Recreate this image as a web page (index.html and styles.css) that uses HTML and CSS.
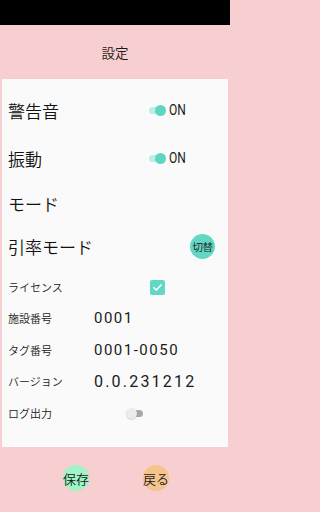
FILE: index.html
```html
<!DOCTYPE html>
<html lang="ja">
<head>
<meta charset="utf-8">
<link rel="stylesheet" href="styles.css">
</head>
<body>
<div class="screen">
  <div class="statusbar"></div>
  <header class="header"><span class="title">設定</span></header>
  <main class="panel">
    <div class="row big r1">
      <span class="label-big">警告音</span>
      <span class="toggle-on"><span class="track-on"><span class="thumb-on"></span></span><span class="on-text">ON</span></span>
    </div>
    <div class="row big r2">
      <span class="label-big">振動</span>
      <span class="toggle-on"><span class="track-on"><span class="thumb-on"></span></span><span class="on-text">ON</span></span>
    </div>
    <div class="row big r3">
      <span class="label-big">モード</span>
    </div>
    <div class="row big r4">
      <span class="label-big">引率モード</span>
      <span class="switch-btn">切替</span>
    </div>
    <div class="row small">
      <span class="label-small">ライセンス</span>
      <span class="checkbox"><svg viewBox="0 0 16 16" width="16" height="16"><path d="M3.6 8.2 L6.6 11.1 L12.4 4.9" fill="none" stroke="#ffffff" stroke-width="1.8" stroke-linecap="square"/></svg></span>
    </div>
    <div class="row small">
      <span class="label-small">施設番号</span>
      <span class="value">0001</span>
    </div>
    <div class="row small">
      <span class="label-small">タグ番号</span>
      <span class="value">0001-0050</span>
    </div>
    <div class="row small">
      <span class="label-small">バージョン</span>
      <span class="value version">0.0.231212</span>
    </div>
    <div class="row small">
      <span class="label-small">ログ出力</span>
      <span class="toggle-off"><span class="track-off"></span><span class="thumb-off"></span></span>
    </div>
  </main>
  <footer class="footer">
    <span class="round-btn save">保存</span>
    <span class="round-btn back">戻る</span>
  </footer>
</div>
</body>
</html>
```

FILE: styles.css
```css
html, body {
  margin: 0;
  padding: 0;
}
html {
  background: #f8cfd0;
}
body {
  width: 230px;
  height: 512px;
  overflow: hidden;
  background: #f8cfd0;
  font-family: "Noto Sans CJK JP", "Noto Sans", sans-serif;
  color: #1a1a1a;
}
.screen {
  display: flex;
  flex-direction: column;
  height: 512px;
}
.statusbar {
  height: 25px;
  background: #000000;
  flex: none;
}
.header {
  height: 54px;
  flex: none;
  display: flex;
  align-items: center;
  justify-content: center;
  background: #f8cfd0;
}
.title {
  font-size: 13.5px;
  font-weight: 350;
  line-height: 1;
  color: #1a1a1a;
  padding-top: 1px;
}
.panel {
  flex: none;
  height: 367.5px;
  margin: 0 2px;
  background: #fafafa;
  box-sizing: border-box;
  padding: 7px 0 0 6px;
  display: flex;
  flex-direction: column;
}
.row {
  display: flex;
  align-items: center;
  position: relative;
}
.big {
  height: 48px;
}
.r3 {
  height: 42px;
}
.r4 {
  height: 44px;
  padding-bottom: 3.25px;
}
.small {
  height: 31.5px;
}
.label-big {
  font-size: 17px;
  font-weight: 350;
  line-height: 1;
  color: #111;
}
.label-small {
  font-size: 11px;
  font-weight: 350;
  line-height: 1;
  color: #1a1a1a;
  width: 86px;
  flex: none;
}
.toggle-on {
  margin-left: auto;
  margin-right: 38px;
  display: flex;
  align-items: center;
}
.track-on {
  position: relative;
  width: 14px;
  height: 7px;
  border-radius: 4px;
  background: #b9eee4;
}
.thumb-on {
  position: absolute;
  right: -3px;
  top: -2px;
  width: 11px;
  height: 11px;
  border-radius: 50%;
  background: #5fd6c2;
}
.on-text {
  margin-left: 6px;
  font-family: "Roboto", "Liberation Sans", sans-serif;
  font-size: 15px;
  line-height: 1;
  color: #1a1a1a;
  transform: scaleX(0.8);
  transform-origin: left center;
}
.switch-btn {
  margin-left: auto;
  margin-right: 13px;
  width: 25px;
  height: 25px;
  border-radius: 50%;
  background: #63d7c4;
  display: flex;
  align-items: center;
  justify-content: center;
  font-size: 10.5px;
  font-weight: 350;
  color: #1a1a1a;
  white-space: nowrap;
  letter-spacing: -0.5px;
}
.checkbox {
  margin-left: 56px;
  width: 15px;
  height: 15px;
  border-radius: 2px;
  background: #63d7c4;
  display: flex;
  align-items: center;
  justify-content: center;
}
.checkbox svg {
  width: 13px;
  height: 13px;
}
.value {
  font-family: "Roboto", "Noto Sans", sans-serif;
  font-size: 15px;
  letter-spacing: 1.5px;
  line-height: 1;
  color: #1a1a1a;
}
.version {
  font-size: 16px;
  letter-spacing: 2.2px;
}
.toggle-off {
  margin-left: 32px;
  position: relative;
  width: 18px;
  height: 11px;
  display: flex;
  align-items: center;
}
.track-off {
  position: absolute;
  left: 3px;
  width: 14px;
  height: 7px;
  border-radius: 4px;
  background: #a8a8a8;
}
.thumb-off {
  position: absolute;
  left: 0;
  width: 11px;
  height: 11px;
  border-radius: 50%;
  background: #ececec;
  box-shadow: 0 0.5px 1px rgba(0,0,0,0.25);
}
.footer {
  flex: 1;
  display: flex;
  align-items: flex-start;
  padding-top: 18.5px;
  padding-left: 63px;
  gap: 54px;
}
.round-btn {
  width: 26px;
  height: 26px;
  border-radius: 50%;
  display: flex;
  align-items: center;
  justify-content: center;
  font-size: 13px;
  font-weight: 350;
  color: #1a1a1a;
  white-space: nowrap;
}
.save {
  background: #9ff5c6;
}
.back {
  background: #f5c38c;
}
```
